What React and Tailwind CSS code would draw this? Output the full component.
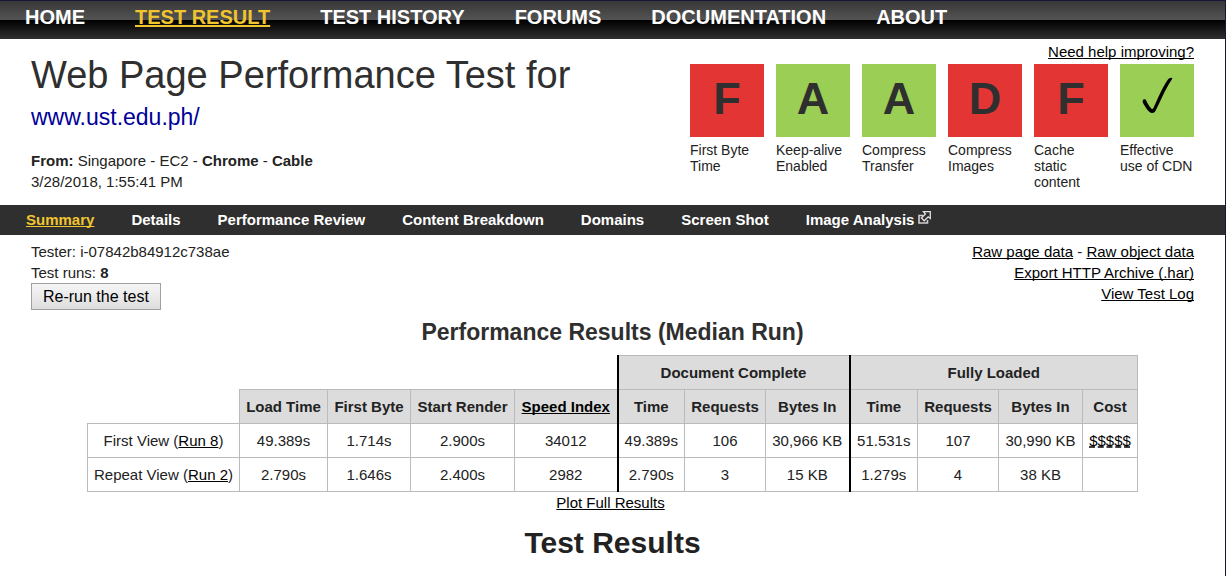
const nav = ['HOME', 'TEST RESULT', 'TEST HISTORY', 'FORUMS', 'DOCUMENTATION', 'ABOUT'];
const tabs = ['Summary', 'Details', 'Performance Review', 'Content Breakdown', 'Domains', 'Screen Shot'];
const grades = [
  { grade: 'F', label: 'First Byte Time', good: false },
  { grade: 'A', label: 'Keep-alive Enabled', good: true },
  { grade: 'A', label: 'Compress Transfer', good: true },
  { grade: 'D', label: 'Compress Images', good: false },
  { grade: 'F', label: 'Cache static content', good: false },
  { grade: null, label: 'Effective use of CDN', good: true },
];
const columns = ['Load Time', 'First Byte', 'Start Render', 'Speed Index', 'Time', 'Requests', 'Bytes In', 'Time', 'Requests', 'Bytes In', 'Cost'];
const columnWidths = ['w-[152px]', 'w-[88px]', 'w-[83px]', 'w-[104px]', 'w-[103px]', 'w-[67px]', 'w-[81px]', 'w-[84px]', 'w-[68px]', 'w-[81px]', 'w-[84px]', 'w-[55px]'];
const rows = [
  { view: 'First View', run: 'Run 8', values: ['49.389s', '1.714s', '2.900s', '34012', '49.389s', '106', '30,966 KB', '51.531s', '107', '30,990 KB', '$$$$$'] },
  { view: 'Repeat View', run: 'Run 2', values: ['2.790s', '1.646s', '2.400s', '2982', '2.790s', '3', '15 KB', '1.279s', '4', '38 KB', ''] },
];
const groupStart = (i) => (i === 4 || i === 7 ? 'border-l-2 border-l-black' : '');

function Link({ children, className = 'underline' }) {
  return (
    <a href="#" className={`text-black ${className}`}>
      {children}
    </a>
  );
}

function CheckMark() {
  return (
    <svg viewBox="0 0 74 73" className="h-full w-full" aria-label="Pass" role="img">
      <path
        d="M22.800 36.600c.6-1.800 2.700-1.700 3.500.1 1.200 2.600 2.900 5.500 5 7.800.8.900 1.500.6 2.100-.5C37.300 36 42.200 23.500 47.600 16c1.300-1.700 3.400-2.600 4.500-1.900.5.700-.3 1.500-1.100 2.600C45 25.500 40.300 38 35.400 47c-1.500 2.600-4.200 2.700-6.200.8-2.700-2.700-4.800-6.200-6.300-9.100-.4-.8-.4-1.400-.1-2.100z"
        fill="#000"
      />
    </svg>
  );
}

function PopOutIcon() {
  return (
    <svg viewBox="0 0 13 13" className="mt-0.5 size-[13px]" fill="none" aria-hidden="true">
      <path d="M5 4.500H1v7.500h8.500V9" stroke="#cfcfcf" strokeWidth="1.600" />
      <path d="M5.500.7h6.800v6.800L10.200 5.800 6.200 9.800 3.400 7 7.400 3z" fill="#2f2f2f" stroke="#e2e2e2" strokeWidth="1.300" />
    </svg>
  );
}

export default function App() {
  return (
    <div className="min-h-screen border-r border-t border-[#16163c] bg-white font-['Liberation_Sans',Arial,sans-serif] text-[15px] leading-[21px] text-[#222] [text-decoration-skip-ink:none]">
      <nav className="flex h-[38px] gap-[50px] bg-linear-[to_bottom,#373737_0%,#545454_50%,#000_50%,#303030_100%] pl-[25px] pt-1 text-xl leading-6 font-bold text-white">
        {nav.map((item, i) => (
          <a key={item} href="#" className={i === 1 ? 'text-[#f1c52e] underline' : ''}>
            {item}
          </a>
        ))}
      </nav>

      <header className="flex h-[166px] justify-between px-[31px]">
        <div>
          <h1 className="pt-3 text-[38px] leading-12 text-[#2f2f2f]">Web Page Performance Test for</h1>
          <h2 className="pt-1 text-[23px] leading-7">
            <a href="#" className="text-[#000099]">www.ust.edu.ph/</a>
          </h2>
          <p className="pt-[19px]">
            <b>From:</b> Singapore - EC2 - <b>Chrome</b> - <b>Cable</b>
            <br />
            3/28/2018, 1:55:41 PM
          </p>
        </div>
        <div className="flex flex-col pt-0.5">
          <Link className="self-end underline">Need help improving?</Link>
          <ul className="mt-0.5 flex gap-3">
            {grades.map(({ grade, label, good }) => (
              <li key={label} className="w-[74px]">
                <div className={`flex h-[73px] items-center justify-center text-[45px] leading-none font-bold text-[#2f2f2f] ${good ? 'bg-[#9bce54]' : 'bg-[#e43535]'}`}>
                  {grade ? <span className="-mt-1">{grade}</span> : <CheckMark />}
                </div>
                <p className="pt-[5px] text-sm leading-4">{label}</p>
              </li>
            ))}
          </ul>
        </div>
      </header>

      <nav className="flex h-[30px] gap-[37px] bg-[#2f2f2f] pl-[26px] pt-1 font-bold text-white">
        {tabs.map((tab, i) => (
          <a key={tab} href="#" className={i === 0 ? 'text-[#f1c52e] underline' : ''}>
            {tab}
          </a>
        ))}
        <a href="#" className="flex items-start gap-1">
          Image Analysis
          <PopOutIcon />
        </a>
      </nav>

      <main>
        <div className="flex justify-between px-[31px] pt-1.5">
          <div>
            <p>Tester: i-07842b84912c738ae</p>
            <p>
              Test runs: <b>8</b>
            </p>
            <button type="button" className="block border border-[#a0a0a0] bg-linear-[to_bottom,#f6f6f6,#dddddd] px-[11px] py-0.5 text-base leading-[21px] text-black">
              Re-run the test
            </button>
          </div>
          <p className="text-right">
            <Link>Raw page data</Link> - <Link>Raw object data</Link>
            <br />
            <Link>Export HTTP Archive (.har)</Link>
            <br />
            <Link>View Test Log</Link>
          </p>
        </div>

        <h2 className="pt-2 text-center text-[23px] leading-7 font-bold text-[#2f2f2f]">Performance Results (Median Run)</h2>

        <table className="mx-auto mt-[9px] border-collapse text-center [&_td]:px-1.5 [&_td]:py-1.5 [&_th]:px-1.5 [&_th]:py-1.5">
          <colgroup>
            {columnWidths.map((width, i) => (
              <col key={i} className={width} />
            ))}
          </colgroup>
          <thead>
            <tr>
              <td colSpan={5}></td>
              <th colSpan={3} className="border border-l-2 border-[#bbb] border-l-black bg-[#dcdcdc]">Document Complete</th>
              <th colSpan={4} className="border border-l-2 border-[#bbb] border-l-black bg-[#dcdcdc]">Fully Loaded</th>
            </tr>
            <tr>
              <td></td>
              {columns.map((name, i) => (
                <th key={i} className={`border border-[#bbb] bg-[#dcdcdc] ${groupStart(i)}`}>
                  {i === 3 ? <Link>{name}</Link> : name}
                </th>
              ))}
            </tr>
          </thead>
          <tbody>
            {rows.map(({ view, run, values }) => (
              <tr key={view}>
                <td className="border border-[#bbb]">
                  {view} (<Link>{run}</Link>)
                </td>
                {values.map((value, i) => (
                  <td key={i} className={`border border-[#bbb] ${groupStart(i)}`}>
                    {i === 10 && value ? <Link className="underline decoration-dashed">{value}</Link> : value}
                  </td>
                ))}
              </tr>
            ))}
          </tbody>
        </table>

        <p className="text-center">
          <span className="pr-1">
            <Link>Plot Full Results</Link>
          </span>
        </p>
        <h1 className="pt-3 text-center text-[30px] leading-9 font-bold text-[#222]">Test Results</h1>
      </main>
    </div>
  );
}
